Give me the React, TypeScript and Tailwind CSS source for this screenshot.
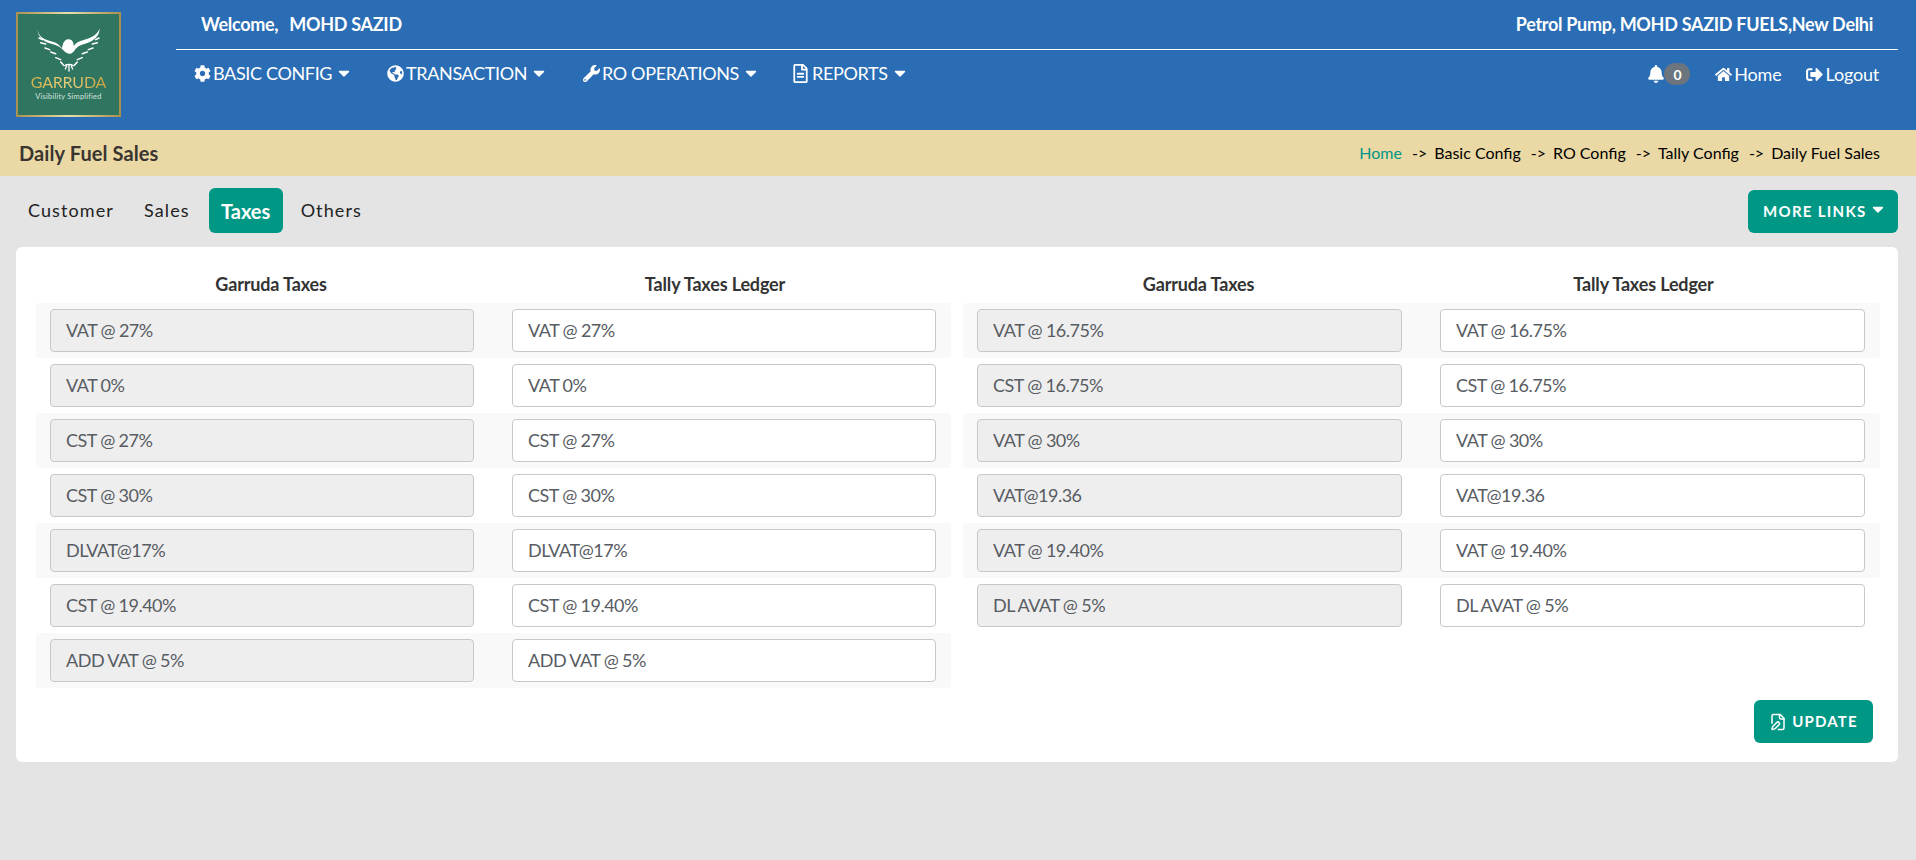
import { FaBell, FaCog, FaGlobeAmericas, FaHome, FaRegFileAlt, FaWrench, FaCaretDown, FaSignOutAlt } from 'react-icons/fa';
import { LuFilePen } from 'react-icons/lu';

const leftRows = ['VAT @ 27%', 'VAT 0%', 'CST @ 27%', 'CST @ 30%', 'DLVAT@17%', 'CST @ 19.40%', 'ADD VAT @ 5%'];
const rightRows = ['VAT @ 16.75%', 'CST @ 16.75%', 'VAT @ 30%', 'VAT@19.36', 'VAT @ 19.40%', 'DL AVAT @ 5%'];

const navItems = [
  { label: 'BASIC CONFIG', icon: <FaCog className="text-[17px]" />, width: 'w-[193px]' },
  { label: 'TRANSACTION', icon: <FaGlobeAmericas className="text-[17px]" />, width: 'w-[196px]' },
  { label: 'RO OPERATIONS', icon: <FaWrench className="text-[17px]" />, width: 'w-[208px]' },
  { label: 'REPORTS', icon: <FaRegFileAlt className="text-[19px]" />, width: 'w-[140px]' },
];

const crumbs = ['Basic Config', 'RO Config', 'Tally Config', 'Daily Fuel Sales'];

function Logo() {
  return (
    <div className="w-[105px] h-[105px] p-[2px] bg-[linear-gradient(90deg,#a8904c,#e8dfa8_50%,#a8904c)] shrink-0">
      <div className="h-full bg-[#2f7560] flex flex-col items-center pt-[13px]">
        <svg width="70" height="45" viewBox="100 80 210 135" fill="none">
          <path d="M110 86c3 22 18 32 46 38 14 3 22 12 28 20 2-12 6-26 18-27 12-1 17 8 17 20 6-9 16-14 30-18 26-7 42-17 48-35-1 27-20 40-46 47-12 3-24 9-30 20-8 12-20 12-30 2-8-10-18-17-34-21-28-7-45-20-47-46z" fill="#fff" />
          <path d="M115 113l10 5M120 127l15 4M133 143l14 5M150 155l15 5M165 172l15 6M180 185l9 10M295 113l-10 5M290 127l-15 4M277 143l-14 5M260 155l-15 5M245 172l-15 6M230 185l-9 10" stroke="#fff" strokeWidth="4.5" strokeLinecap="round" />
          <path d="M192 196c6-5 20-5 26 0M205 194v18M198 197l-4 9M212 197l4 9" stroke="#fff" strokeWidth="4" strokeLinecap="round" />
        </svg>
        <div className="text-[16px] leading-[18px] mt-[1px] tracking-[-0.2px] bg-[linear-gradient(90deg,#d8b24a,#e6cf7c,#c9a040)] bg-clip-text text-transparent">GARRUDA</div>
        <div className="text-[7.5px] leading-[10px] mt-[1px] tracking-[0.2px] text-[#d5e4dd]">Visibility Simplified</div>
      </div>
    </div>
  );
}

function Row({ value, striped }: { value: string; striped: boolean }) {
  return (
    <div className={`h-[55px] flex items-center rounded-[3px] pl-[14px] pr-[15px] gap-[38px] ${striped ? 'bg-[#f9f9f9]' : ''}`}>
      <input readOnly value={value} className="flex-1 min-w-0 h-[43px] rounded-[4px] border border-[#c8c8c8] bg-[#eeeeee] px-[15px] pb-[2px] text-[18px] tracking-[-0.5px] [word-spacing:-0.3px] text-[#585c63] outline-none" />
      <input readOnly value={value} className="flex-1 min-w-0 h-[43px] rounded-[4px] border border-[#c8c8c8] bg-white px-[15px] pb-[2px] text-[18px] tracking-[-0.5px] [word-spacing:-0.3px] text-[#585c63] outline-none" />
    </div>
  );
}

function TaxColumn({ rows, className }: { rows: string[]; className: string }) {
  return (
    <div className={`min-w-0 ${className}`}>
      <div className="flex h-[38px] items-center text-[18px] font-bold tracking-[-0.15px] text-[#333333] pl-[13px] pr-[14px]">
        <div className="flex-1 text-center">Garruda Taxes</div>
        <div className="flex-1 text-center">Tally Taxes Ledger</div>
      </div>
      {rows.map((r, i) => (
        <Row key={r} value={r} striped={i % 2 === 0} />
      ))}
    </div>
  );
}

export default function App() {
  return (
    <div className="min-h-[860px] bg-[#e4e4e4] font-['Lato',sans-serif]">
      <header className="h-[130px] bg-[#2a6db5] flex text-white">
        <div className="w-[176px] shrink-0 pl-[16px] pt-[12px]">
          <Logo />
        </div>
        <div className="flex-1 mr-[18px]">
          <div className="h-[50px] border-b border-white flex items-center justify-between pl-[25px] pr-[25px] pb-[1px] text-[18px] font-bold tracking-[-0.3px]">
            <div className="flex gap-[11px]">
              <span>Welcome,</span>
              <span>MOHD SAZID</span>
            </div>
            <div>Petrol Pump, MOHD SAZID FUELS,New Delhi</div>
          </div>
          <div className="flex justify-between pl-[18px] pr-[19px] pt-[10px]">
            <nav className="flex">
              {navItems.map((n) => (
                <div key={n.label} className={`flex items-center gap-[2px] h-[26px] text-[18px] tracking-[-0.35px] ${n.width}`}>
                  {n.icon}
                  <span>{n.label}</span>
                  <FaCaretDown className="text-[18px] ml-[1px]" />
                </div>
              ))}
            </nav>
            <div className="flex items-center h-[26px] text-[18px] tracking-[-0.2px] mt-[1px]">
              <FaBell className="text-[18px]" />
              <span className="h-[22px] min-w-[26px] -ml-[1px] rounded-full bg-[#6c757d] flex items-center justify-center text-[14px] font-bold">0</span>
              <FaHome className="ml-[25px] text-[17px]" />
              <span className="ml-[2px]">Home</span>
              <FaSignOutAlt className="ml-[24px] text-[17px]" />
              <span className="ml-[3px]">Logout</span>
            </div>
          </div>
        </div>
      </header>

      <div className="h-[46px] bg-[#ebd9a5] flex items-center justify-between pl-[19px] pr-[36px]">
        <h1 className="text-[20px] font-bold tracking-[0.1px] text-[#3a3530] leading-none">Daily Fuel Sales</h1>
        <div className="flex items-center text-[16px] text-black">
          <span className="text-[#009688]">Home</span>
          {crumbs.map((c) => (
            <span key={c} className="flex">
              <span className="ml-[10px] mr-[7px]">-&gt;</span>
              <span>{c}</span>
            </span>
          ))}
        </div>
      </div>

      <div className="flex items-center justify-between h-[71px] pl-[16px] pr-[18px]">
        <div className="flex items-center text-[18px] tracking-[1.1px] text-[#222222] pb-[2px]">
          <div className="px-[12px]">Customer</div>
          <div className="px-[12px] ml-[6px]">Sales</div>
          <div className="h-[45px] w-[74px] rounded-[6px] bg-[#009885] ml-[7px] flex items-center justify-center font-bold tracking-normal text-[20px] text-white">Taxes</div>
          <div className="px-[18px]">Others</div>
        </div>
        <button className="h-[43px] w-[150px] rounded-[6px] bg-[#009885] flex items-center pl-[15px] gap-[2px] text-[15px] font-bold tracking-[1.3px] text-white">
          MORE LINKS
          <FaCaretDown className="text-[18px] -mt-[5px]" />
        </button>
      </div>

      <main className="ml-[16px] mr-[18px] h-[515px] bg-white rounded-[6px] pl-[20px] pr-[18px] pt-[18px]">
        <div className="flex gap-[12px]">
          <TaxColumn rows={leftRows} className="w-[915px]" />
          <TaxColumn rows={rightRows} className="flex-1" />
        </div>
        <div className="flex justify-end pr-[7px] mt-[12px]">
          <button className="h-[43px] w-[119px] rounded-[6px] bg-[#009885] flex items-center justify-center gap-[5px] text-[15px] font-bold tracking-[1.2px] text-white">
            <LuFilePen className="text-[18px]" />
            UPDATE
          </button>
        </div>
      </main>
    </div>
  );
}
